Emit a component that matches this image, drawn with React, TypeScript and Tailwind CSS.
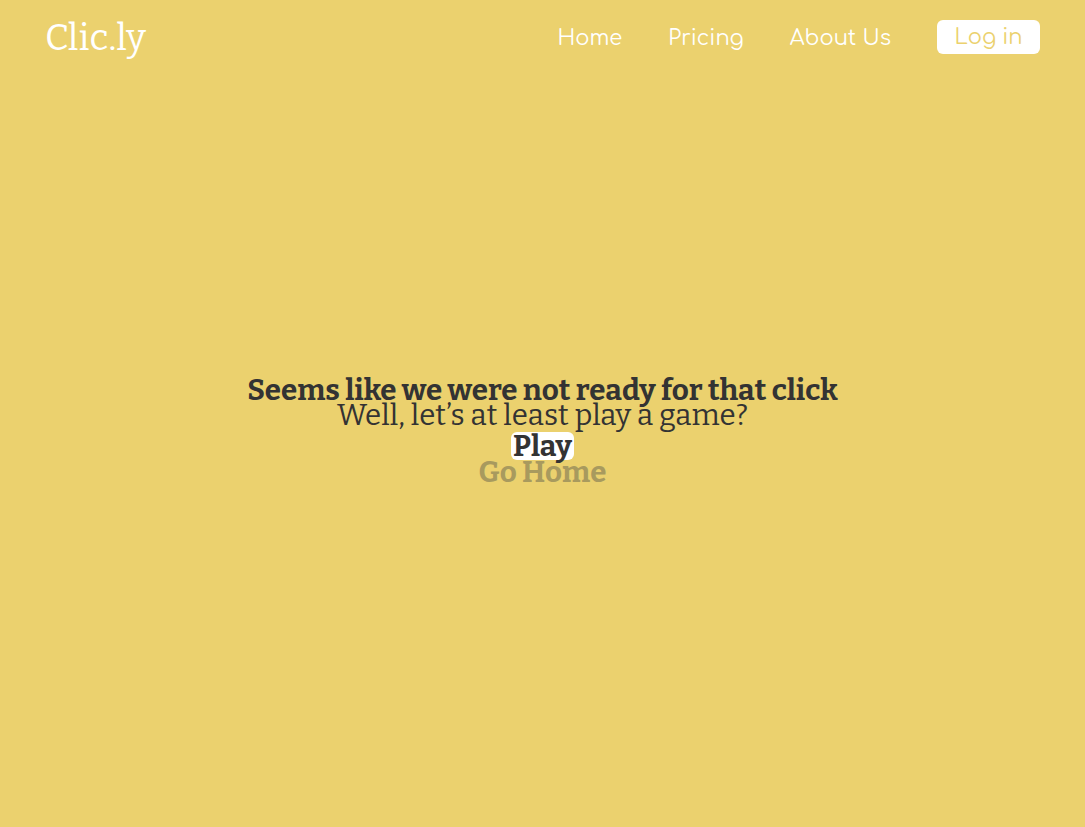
export default function App() {
  const serif = "font-['Bitter','DejaVu_Serif',serif]";
  return (
    <div className="min-h-screen bg-[#ebd16e] flex flex-col">
      <header className="flex items-center justify-between px-[45px] h-[74px]">
        <a className={`${serif} text-[37px] leading-none text-white`}>Clic.ly</a>
        <nav className="flex items-center font-['Comfortaa','DejaVu_Sans',sans-serif] text-[21px] text-white">
          <a className="mr-[46px] pt-[3px]">Home</a>
          <a className="mr-[46px] pt-[3px]">Pricing</a>
          <a className="mr-[46px] pt-[3px]">About Us</a>
          <button className="bg-white text-[#ebd16e] rounded-md w-[103px] h-[34px] pt-[2px] text-[21px]">Log in</button>
        </nav>
      </header>
      <main className={`${serif} flex-1 flex flex-col items-center justify-center text-[#333333] text-[29.5px] leading-[25px] pb-[38px]`}>
        <h1 className="font-bold">Seems like we were not ready for that click</h1>
        <p>Well, let’s at least play a game?</p>
        <button className="font-bold bg-white rounded-md px-[2px] py-[1px] mt-[4px] leading-[26px]">Play</button>
        <a className="font-bold text-[#a89a5e]">Go Home</a>
      </main>
    </div>
  );
}
